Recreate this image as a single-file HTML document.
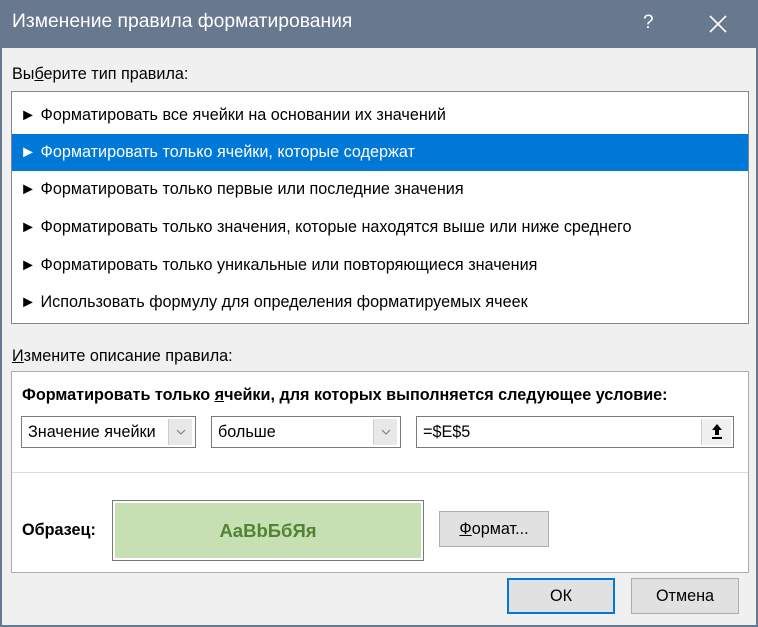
<!DOCTYPE html>
<html><head><meta charset="utf-8"><style>
*{margin:0;padding:0;box-sizing:border-box}
body{width:758px;height:627px;background:#67788f;font-family:"Liberation Sans","Noto Sans CJK SC",sans-serif;font-size:16.2px;color:#000;position:relative;overflow:hidden}
.abs{position:absolute}
.win{left:2px;top:48px;width:754px;height:577px;background:#f0f0f0}
.title{left:12px;top:11px;color:#fff;font-size:19.3px}
.list{left:11px;top:91px;width:738px;height:233px;background:#fff;border:1px solid #828790}
.row{position:absolute;left:0;width:736px;height:37px;line-height:37px;padding-left:8px;white-space:nowrap}
.row.sel{background:#0078d7;color:#fff}
.desc{left:11px;top:371px;width:738px;height:202px;background:#fff;border:1px solid #adadad}
.dd{position:absolute;top:416px;height:32px;border:1px solid #7a7a7a;background:#fff;line-height:30px;padding-left:6px}
.arr{position:absolute;top:2px;width:24px;height:26px;background:#e8e8e8;border-left:1px solid #ccc}
.btn{position:absolute;background:#e1e1e1;border:1px solid #adadad;text-align:center}
u{text-decoration:underline}
</style></head><body>
<div class="abs title">Изменение правила форматирования</div>
<div class="abs" style="left:643px;top:12px;color:#fff;font-size:19px">?</div>
<svg class="abs" style="left:709px;top:15px" width="18" height="18"><path d="M1 1L17 17M17 1L1 17" stroke="#fff" stroke-width="1.6"/></svg>
<div class="abs win"></div>
<div class="abs" style="left:12px;top:65px">Вы<u>б</u>ерите тип правила:</div>
<div class="abs list">
<div class="row" style="top:5px">► Форматировать все ячейки на основании их значений</div>
<div class="row sel" style="top:42px">► Форматировать только ячейки, которые содержат</div>
<div class="row" style="top:79px">► Форматировать только первые или последние значения</div>
<div class="row" style="top:117px">► Форматировать только значения, которые находятся выше или ниже среднего</div>
<div class="row" style="top:155px">► Форматировать только уникальные или повторяющиеся значения</div>
<div class="row" style="top:192px">► Использовать формулу для определения форматируемых ячеек</div>
</div>
<div class="abs" style="left:12px;top:347px"><u>И</u>змените описание правила:</div>
<div class="abs desc"></div>
<div class="abs" style="left:22px;top:386px;font-weight:bold">Форматировать только <u>я</u>чейки, для которых выполняется следующее условие:</div>
<div class="dd" style="left:21px;width:175px">Значение ячейки<div class="arr" style="left:146px"><svg width="24" height="26"><path d="M8 11l4 4 4-4" fill="none" stroke="#777"/></svg></div></div>
<div class="dd" style="left:211px;width:190px">больше<div class="arr" style="left:161px"><svg width="24" height="26"><path d="M8 11l4 4 4-4" fill="none" stroke="#777"/></svg></div></div>
<div class="dd" style="left:416px;width:318px">=$E$5<div class="arr" style="left:284px;width:30px;background:#f0f0f0"><svg width="30" height="26"><path d="M15 5l-5 6h3v5h4v-5h3z" fill="#000"/><rect x="10" y="18" width="10" height="2" fill="#000"/></svg></div></div>
<div class="abs" style="left:12px;top:472px;width:736px;height:1px;background:#ddd"></div>
<div class="abs" style="left:22px;top:521px;font-weight:bold">Образец:</div>
<div class="abs" style="left:112px;top:500px;width:312px;height:61px;border:1px solid #777;padding:2px;background:#fff"><div style="background:#c6e0b4;height:100%;text-align:center;line-height:55px;color:#548235;font-weight:bold;font-size:18.5px">AaBbБбЯя</div></div>
<div class="btn" style="left:439px;top:511px;width:110px;height:36px;line-height:34px"><u>Ф</u>ормат...</div>
<div class="btn" style="left:507px;top:578px;width:108px;height:36px;line-height:32px;border:2px solid #0078d7">ОК</div>
<div class="btn" style="left:631px;top:578px;width:108px;height:36px;line-height:34px">Отмена</div>
</body></html>
